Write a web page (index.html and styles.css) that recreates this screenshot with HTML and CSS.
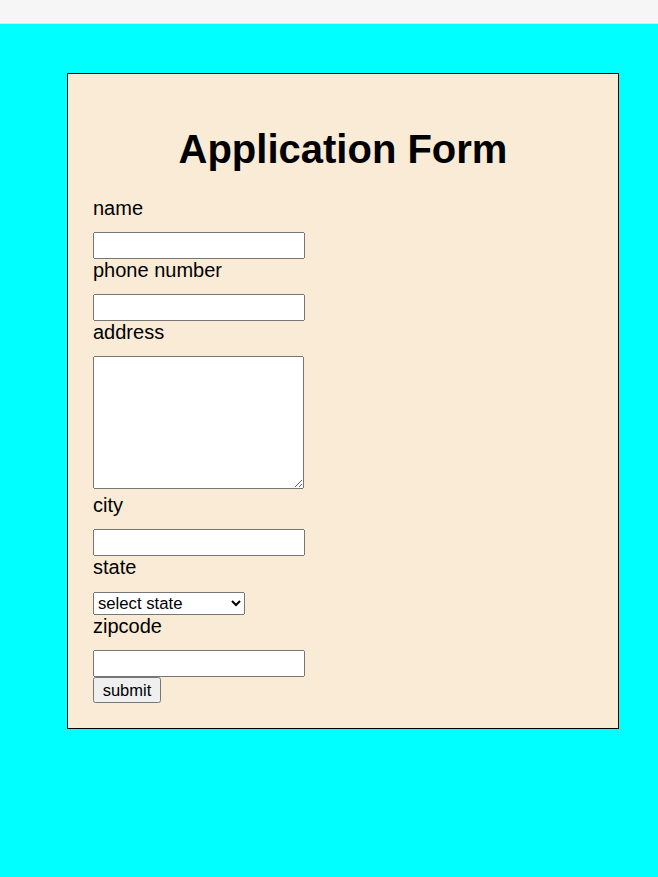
FILE: index.html
```html
<!DOCTYPE html>
<html>
<head>
<meta charset="utf-8">
<title>Application Form</title>
<link rel="stylesheet" href="styles.css">
</head>
<body>
<div class="topbar"></div>
<main class="page">
  <form class="card">
    <h1 class="title">Application Form</h1>
    <label class="lbl" for="name">name</label>
    <input class="field" id="name" type="text">
    <label class="lbl" for="phone">phone number</label>
    <input class="field" id="phone" type="text">
    <label class="lbl" for="address">address</label>
    <textarea class="area" id="address"></textarea>
    <label class="lbl" for="city">city</label>
    <input class="field" id="city" type="text">
    <label class="lbl" for="state">state</label>
    <select class="pick" id="state">
      <option>select state</option>
    </select>
    <label class="lbl" for="zip">zipcode</label>
    <input class="field" id="zip" type="text">
    <button class="submit" type="submit">submit</button>
  </form>
</main>
</body>
</html>
```
FILE: styles.css
```css
html, body {
  margin: 0;
  padding: 0;
}
body {
  background: #00ffff;
  font-family: "Liberation Sans", Arial, sans-serif;
  color: #000;
  min-height: 877px;
}
.topbar {
  height: 23px;
  background: #f6f6f6;
  border-bottom: 1px solid #e2e2e2;
}
.page {
  padding: 49px 0 0 67px;
}
.card {
  box-sizing: border-box;
  width: 552px;
  height: 656px;
  background: #faebd7;
  border: 1px solid #000;
  padding: 52px 25px 0 25px;
  display: flex;
  flex-direction: column;
  align-items: flex-start;
}
.title {
  align-self: stretch;
  text-align: center;
  font-size: 40px;
  font-weight: bold;
  line-height: 46px;
  margin: 0 0 25px 0;
}
.lbl {
  display: block;
  font-size: 20px;
  line-height: 23px;
  margin-bottom: 12px;
}
.field {
  box-sizing: border-box;
  width: 212px;
  height: 27px;
  margin: 0;
  font-family: "Liberation Sans", Arial, sans-serif;
  font-size: 16px;
}
.area {
  box-sizing: border-box;
  width: 211px;
  height: 133px;
  margin: 0 0 5px 0;
  font-family: "Liberation Sans", Arial, sans-serif;
}
.pick {
  box-sizing: border-box;
  width: 152px;
  height: 23px;
  margin: 1px 0 0 0;
  font-family: "Liberation Sans", Arial, sans-serif;
  font-size: 16.7px;
}
.submit {
  box-sizing: border-box;
  height: 26px;
  width: 68px;
  margin: 0;
  padding: 0 6px;
  font-family: "Liberation Sans", Arial, sans-serif;
  font-size: 16.5px;
}
```
